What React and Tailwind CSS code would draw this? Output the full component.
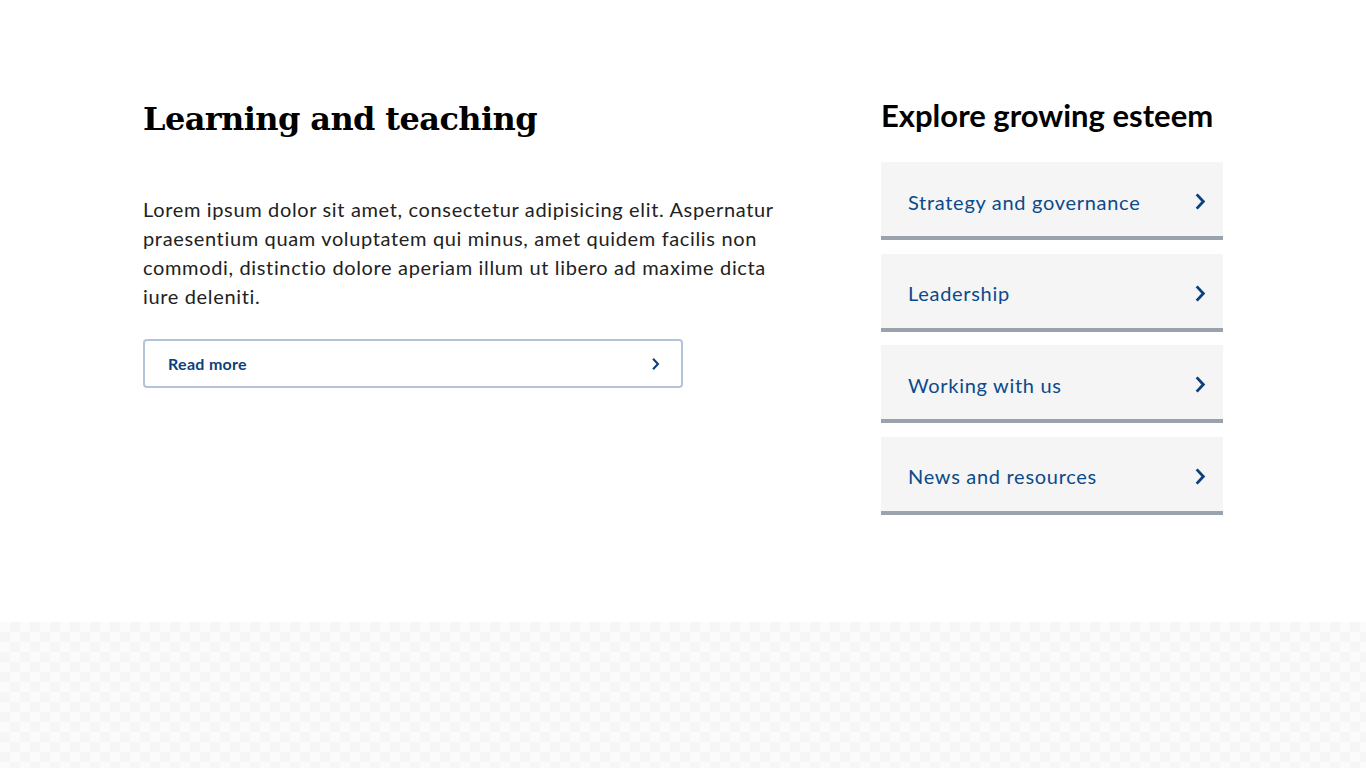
const links = [
  "Strategy and governance",
  "Leadership",
  "Working with us",
  "News and resources",
];

const sans = "font-['Lato','Noto_Sans',sans-serif]";

function Chevron({ className }) {
  return (
    <svg viewBox="0 0 12 20" fill="none" className={className}>
      <path d="M2.5 2.5 9.5 10 2.5 17.5" stroke="currentColor" strokeWidth="3" />
    </svg>
  );
}

export default function App() {
  return (
    <div className={`min-h-screen bg-white ${sans}`}>
      <section className="h-[622px] bg-white">
        <div className="mx-auto grid max-w-[1080px] grid-cols-[1fr_342px] gap-[98px] pt-[95px]">
          {/* LEFT */}
          <div>
            <h2 className="font-['DejaVu_Serif',serif] text-[32px] font-bold leading-[48px] tracking-[-0.6px] text-black">
              Learning and teaching
            </h2>
            <p className="mt-[52px] max-w-[645px] text-[20px] leading-[29px] tracking-[0.65px] text-[#222]">
              Lorem ipsum dolor sit amet, consectetur adipisicing elit. Aspernatur
              praesentium quam voluptatem qui minus, amet quidem facilis non
              commodi, distinctio dolore aperiam illum ut libero ad maxime dicta
              iure deleniti.
            </p>
            <a
              href="#"
              className="mt-[28px] flex h-[49px] w-[540px] items-center justify-between rounded-[4px] border-2 border-[#b3c4d8] pl-[23px] pr-[21px] text-[16px] font-bold tracking-[0.3px] text-[#0b3f7e]"
            >
              Read more
              <Chevron className="h-[14px] w-[9px]" />
            </a>
          </div>

          {/* RIGHT */}
          <aside>
            <h3 className="text-[31px] font-bold leading-[40px] text-black">
              Explore growing esteem
            </h3>
            <ul className="mt-[27px] flex flex-col gap-[13.5px]">
              {links.map((label) => (
                <li key={label}>
                  <a
                    href="#"
                    className="flex h-[78px] items-center justify-between border-b-4 border-[#9aa2ab] bg-[#f5f5f5] pl-[27px] pr-[17px] pt-[5px] text-[20px] tracking-[0.7px] text-[#0b4a8b]"
                  >
                    {label}
                    <Chevron className="h-[19px] w-[12px] text-[#0b3f7e]" />
                  </a>
                </li>
              ))}
            </ul>
          </aside>
        </div>
      </section>
      <div className="h-[146px] bg-[#fbfbfb] bg-[image:repeating-conic-gradient(#f6f6f6_0_25%,#fbfbfb_0_50%)] bg-[length:20px_20px]" />
    </div>
  );
}
